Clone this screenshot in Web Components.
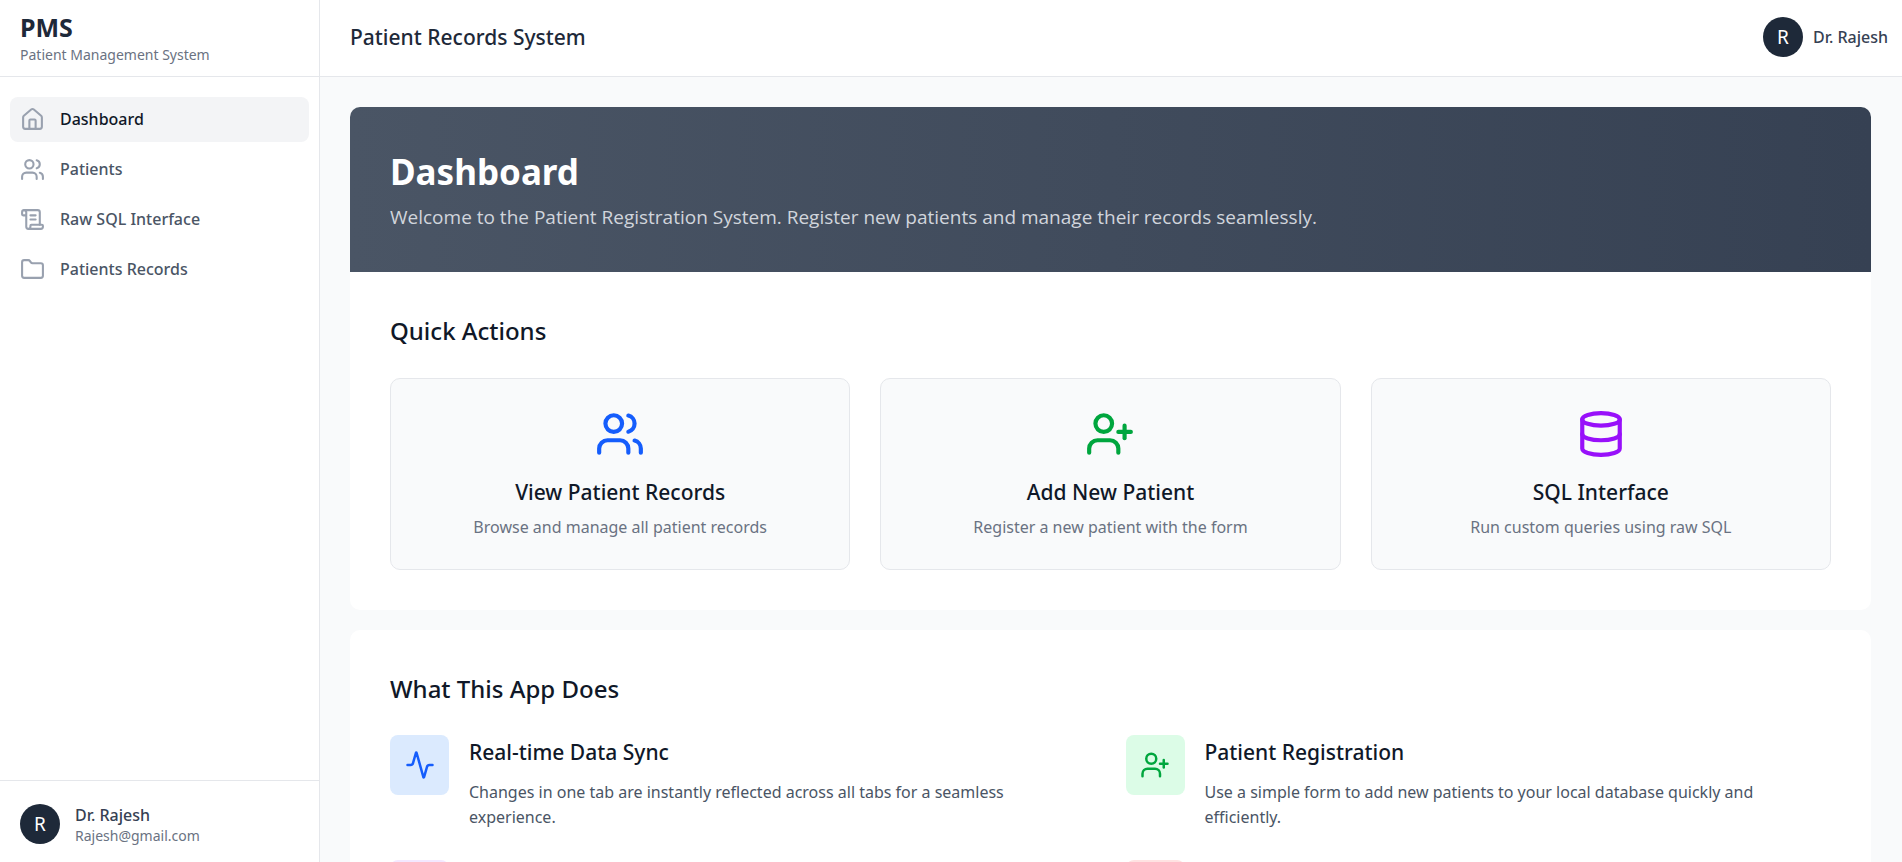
<!DOCTYPE html>
<html lang="en">
<head>
<meta charset="utf-8">
<meta name="viewport" content="width=device-width, initial-scale=1">
<title>PMS - Patient Management System</title>
<style>
  :root {
    --gray-50: #f9fafb;
    --gray-100: #f3f4f6;
    --gray-200: #e5e7eb;
    --gray-300: #d1d5dc;
    --gray-400: #99a1af;
    --gray-500: #6a7282;
    --gray-600: #4a5565;
    --gray-700: #364153;
    --gray-800: #1e2939;
    --gray-900: #101828;
  }
  body {
    margin: 0;
    font-family: "Noto Sans", "Open Sans", sans-serif;
    font-size: 16px;
    line-height: 25px;
    color: var(--gray-900);
  }
</style>
</head>
<body>
<pms-app></pms-app>

<script>
const ICONS = {
  house: '<path d="M15 21v-8a1 1 0 0 0-1-1h-4a1 1 0 0 0-1 1v8"/><path d="M3 10a2 2 0 0 1 .709-1.528l7-5.999a2 2 0 0 1 2.582 0l7 5.999A2 2 0 0 1 21 10v9a2 2 0 0 1-2 2H5a2 2 0 0 1-2-2z"/>',
  users: '<path d="M16 21v-2a4 4 0 0 0-4-4H6a4 4 0 0 0-4 4v2"/><path d="M16 3.128a4 4 0 0 1 0 7.744"/><path d="M22 21v-2a4 4 0 0 0-3-3.87"/><circle cx="9" cy="7" r="4"/>',
  scroll: '<path d="M15 12h-5"/><path d="M15 8h-5"/><path d="M19 17V5a2 2 0 0 0-2-2H4"/><path d="M8 21h12a2 2 0 0 0 2-2v-1a1 1 0 0 0-1-1H11a1 1 0 0 0-1 1v1a2 2 0 1 1-4 0V5a2 2 0 1 0-4 0v2a1 1 0 0 0 1 1h3"/>',
  folder: '<path d="M20 20a2 2 0 0 0 2-2V8a2 2 0 0 0-2-2h-7.9a2 2 0 0 1-1.69-.9L9.6 3.9A2 2 0 0 0 7.93 3H4a2 2 0 0 0-2 2v13a2 2 0 0 0 2 2Z"/>',
  'user-plus': '<path d="M16 21v-2a4 4 0 0 0-4-4H6a4 4 0 0 0-4 4v2"/><circle cx="9" cy="7" r="4"/><path d="M19 8v6"/><path d="M22 11h-6"/>',
  database: '<ellipse cx="12" cy="5" rx="9" ry="3"/><path d="M3 5v14a9 3 0 0 0 18 0V5"/><path d="M3 12a9 3 0 0 0 18 0"/>',
  activity: '<path d="M22 12h-2.48a2 2 0 0 0-1.93 1.46l-2.35 8.36a.25.25 0 0 1-.48 0L9.24 2.18a.25.25 0 0 0-.48 0l-2.35 8.36A2 2 0 0 1 4.49 12H2"/>',
  shield: '<path d="M20 13c0 5-3.5 7.5-7.66 8.95a1 1 0 0 1-.67-.01C7.5 20.5 4 18 4 13V6a1 1 0 0 1 1-1c2 0 4.5-1.2 6.24-2.72a1.17 1.17 0 0 1 1.52 0C14.51 3.81 17 5 19 5a1 1 0 0 1 1 1z"/>'
};

class Component extends HTMLElement {
  connectedCallback() {
    if (this.shadowRoot) return;
    this.attachShadow({ mode: 'open' }).innerHTML = this.render();
  }
  attr(name) { return this.getAttribute(name) || ''; }
}

customElements.define('pms-icon', class extends Component {
  render() {
    return `
      <style>
        :host { display: block; flex: none; width: var(--icon-size, 25px); height: var(--icon-size, 25px); }
        svg { display: block; width: 100%; height: 100%; }
      </style>
      <svg viewBox="0 0 24 24" fill="none" stroke="currentColor" stroke-width="2"
           stroke-linecap="round" stroke-linejoin="round" aria-hidden="true">${ICONS[this.attr('name')]}</svg>`;
  }
});

customElements.define('pms-avatar', class extends Component {
  render() {
    return `
      <style>
        :host {
          display: flex; flex: none; align-items: center; justify-content: center;
          width: 40px; height: 40px; border-radius: 50%;
          background: var(--gray-800); color: #fff; font-size: 19px; font-weight: 400;
        }
      </style>
      <slot></slot>`;
  }
});

customElements.define('pms-nav-item', class extends Component {
  render() {
    const active = this.hasAttribute('active');
    return `
      <style>
        :host { display: block; }
        a {
          display: flex; align-items: center; gap: 15px; padding: 10px;
          border-radius: 8px; font-weight: 500; text-decoration: none; color: var(--gray-600);
        }
        a[aria-current] { background: var(--gray-100); color: var(--gray-900); }
        pms-icon { color: var(--gray-400); }
      </style>
      <a href="${this.attr('href')}" ${active ? 'aria-current="page"' : ''}>
        <pms-icon name="${this.attr('icon')}"></pms-icon><span><slot></slot></span>
      </a>`;
  }
});

customElements.define('pms-sidebar', class extends Component {
  render() {
    return `
      <style>
        :host {
          display: flex; flex-direction: column; flex: none; box-sizing: border-box;
          width: 320px; border-right: 1px solid var(--gray-200); background: #fff;
        }
        .brand {
          box-sizing: border-box; height: 77px; padding: 12px 20px 0;
          border-bottom: 1px solid var(--gray-200);
        }
        h1 { margin: 0; font-size: 25px; line-height: 30px; font-weight: 700; color: var(--gray-800); }
        p { margin: 0; font-size: 14px; color: var(--gray-500); }
        nav { display: flex; flex: 1; flex-direction: column; gap: 5px; padding: 20px 10px; }
        footer {
          display: flex; align-items: center; gap: 15px; padding: 22px 20px 17px;
          border-top: 1px solid var(--gray-200);
        }
        .name { line-height: 24px; font-weight: 500; color: var(--gray-700); }
        .mail { line-height: 18px; }
      </style>
      <div class="brand"><h1>PMS</h1><p>Patient Management System</p></div>
      <nav aria-label="Main">
        <pms-nav-item href="#dashboard" icon="house" active>Dashboard</pms-nav-item>
        <pms-nav-item href="#patients" icon="users">Patients</pms-nav-item>
        <pms-nav-item href="#sql" icon="scroll">Raw SQL Interface</pms-nav-item>
        <pms-nav-item href="#records" icon="folder">Patients Records</pms-nav-item>
      </nav>
      <footer>
        <pms-avatar>R</pms-avatar>
        <div><div class="name">Dr. Rajesh</div><p class="mail">Rajesh@gmail.com</p></div>
      </footer>`;
  }
});

customElements.define('pms-topbar', class extends Component {
  render() {
    return `
      <style>
        :host {
          display: flex; flex: none; align-items: center; justify-content: space-between;
          padding: 17px 14px 19px 30px; border-bottom: 1px solid var(--gray-200); background: #fff;
        }
        h2 { margin: 0; font-size: 21px; font-weight: 500; color: var(--gray-800); }
        .user { display: flex; align-items: center; gap: 10px; font-weight: 500; color: var(--gray-700); }
      </style>
      <h2><slot></slot></h2>
      <div class="user"><pms-avatar>R</pms-avatar><span>Dr. Rajesh</span></div>`;
  }
});

customElements.define('pms-hero', class extends Component {
  render() {
    return `
      <style>
        :host {
          display: block; padding: 40px; color: #fff;
          background: linear-gradient(to right, var(--gray-600), var(--gray-700));
        }
        h1 { margin: 0 0 5px; font-size: 35px; line-height: 50px; font-weight: 700; }
        p { margin: 0; font-family: "Open Sans", sans-serif; font-size: 19px; line-height: 30px; color: var(--gray-300); }
      </style>
      <h1>${this.attr('heading')}</h1>
      <p><slot></slot></p>`;
  }
});

customElements.define('pms-panel', class extends Component {
  render() {
    return `
      <style>
        :host { display: block; overflow: hidden; border-radius: 10px; background: #fff; }
        section { padding: 40px; }
        h2 { margin: 0; font-size: 24px; line-height: 38px; font-weight: 500; }
      </style>
      <slot name="banner"></slot>
      <section><h2>${this.attr('heading')}</h2><slot></slot></section>`;
  }
});

customElements.define('pms-action', class extends Component {
  render() {
    return `
      <style>
        :host { display: block; }
        a {
          display: flex; flex-direction: column; align-items: center; padding: 30px 30px 29px;
          border: 1px solid var(--gray-200); border-radius: 10px; background: var(--gray-50);
          text-align: center; text-decoration: none; color: var(--gray-900);
        }
        pms-icon { --icon-size: 50px; color: var(--tint); }
        h3 { margin: 16px 0 5px; font-size: 21px; line-height: 35px; font-weight: 500; }
        p { margin: 0; color: var(--gray-500); }
      </style>
      <a href="${this.attr('href')}">
        <pms-icon name="${this.attr('icon')}"></pms-icon>
        <h3>${this.attr('heading')}</h3>
        <p><slot></slot></p>
      </a>`;
  }
});

customElements.define('pms-feature', class extends Component {
  render() {
    const heading = this.attr('heading');
    return `
      <style>
        :host { display: flex; align-items: flex-start; gap: 20px; }
        .tile {
          display: flex; flex: none; align-items: center; justify-content: center;
          width: 59px; height: 60px; border-radius: 8px; background: var(--tile); color: var(--tint);
        }
        pms-icon { --icon-size: 30px; }
        h3 { margin: 0 0 10px; font-size: 21px; line-height: 35px; font-weight: 500; }
        p { margin: 0; padding-right: 20px; color: var(--gray-600); }
      </style>
      <div class="tile"><pms-icon name="${this.attr('icon')}"></pms-icon></div>
      ${heading ? `<div><h3>${heading}</h3><p><slot></slot></p></div>` : ''}`;
  }
});

customElements.define('pms-dashboard', class extends Component {
  render() {
    return `
      <style>
        :host { display: flex; flex-direction: column; gap: 20px; padding: 30px 31px 30px 30px; }
        pms-panel { flex: none; }
        .actions { display: grid; grid-template-columns: repeat(3, 1fr); gap: 30px; margin-top: 28px; }
        .features { display: grid; grid-template-columns: repeat(2, 1fr); gap: 30px; margin-top: 27px; }
        .blue { --tint: #155dfc; --tile: #dbeafe; }
        .green { --tint: #00a63e; --tile: #dcfce7; }
        .purple { --tint: #9810fa; --tile: #f3e8ff; }
        .red { --tint: #e7000b; --tile: #ffe2e2; }
      </style>
      <pms-panel heading="Quick Actions">
        <pms-hero slot="banner" heading="Dashboard">Welcome to the Patient Registration System. Register new patients and manage their records seamlessly.</pms-hero>
        <div class="actions">
          <pms-action class="blue" href="#records" icon="users" heading="View Patient Records">Browse and manage all patient records</pms-action>
          <pms-action class="green" href="#patients" icon="user-plus" heading="Add New Patient">Register a new patient with the form</pms-action>
          <pms-action class="purple" href="#sql" icon="database" heading="SQL Interface">Run custom queries using raw SQL</pms-action>
        </div>
      </pms-panel>
      <pms-panel heading="What This App Does">
        <div class="features">
          <pms-feature class="blue" icon="activity" heading="Real-time Data Sync">Changes in one tab are instantly reflected across all tabs for a seamless experience.</pms-feature>
          <pms-feature class="green" icon="user-plus" heading="Patient Registration">Use a simple form to add new patients to your local database quickly and efficiently.</pms-feature>
          <pms-feature class="purple" icon="database"></pms-feature>
          <pms-feature class="red" icon="shield"></pms-feature>
        </div>
      </pms-panel>`;
  }
});

customElements.define('pms-app', class extends Component {
  render() {
    return `
      <style>
        :host { display: flex; height: 100vh; background: var(--gray-50); }
        .column { display: flex; flex: 1; flex-direction: column; min-width: 0; }
        main { flex: 1; min-height: 0; overflow-y: auto; scrollbar-width: none; }
      </style>
      <pms-sidebar></pms-sidebar>
      <div class="column">
        <pms-topbar>Patient Records System</pms-topbar>
        <main><pms-dashboard></pms-dashboard></main>
      </div>`;
  }
});
</script>
</body>
</html>
